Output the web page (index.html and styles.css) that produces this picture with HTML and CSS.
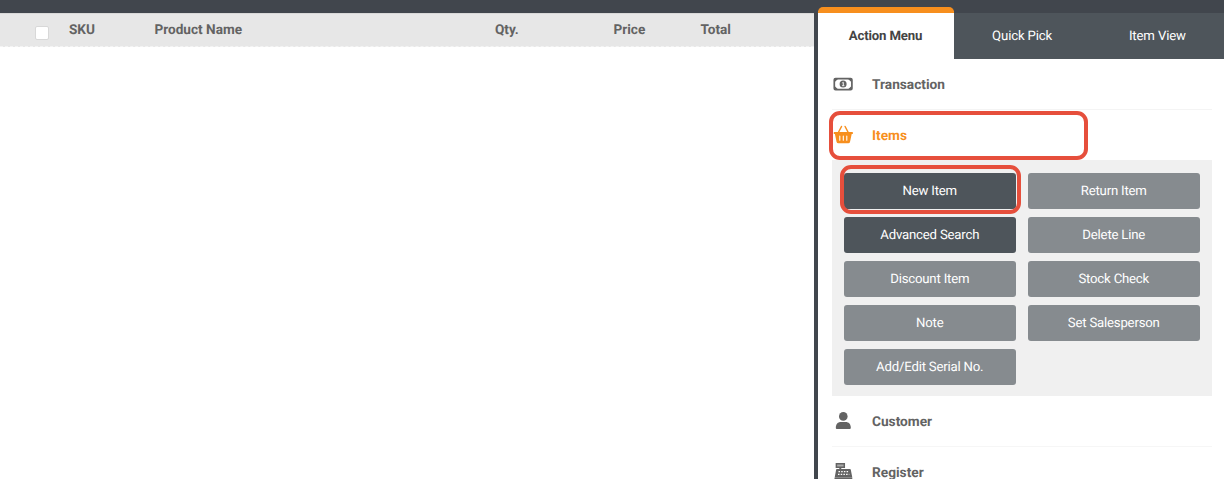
FILE: index.html
```html
<!DOCTYPE html>
<html lang="en">
<head>
<meta charset="utf-8">
<title>Point of Sale</title>
<link rel="stylesheet" href="styles.css">
</head>
<body>
<div class="app">
  <main class="sale">
    <div class="sale-head">
      <span class="check"></span>
      <span>SKU</span>
      <span>Product Name</span>
      <span>Qty.</span>
      <span>Price</span>
      <span>Total</span>
    </div>
  </main>
  <aside class="panel">
    <nav class="tabs">
      <a class="tab active">Action Menu</a>
      <a class="tab">Quick Pick</a>
      <a class="tab">Item View</a>
    </nav>
    <div class="menu">
      <div class="row first">
        <svg class="icon" viewBox="0 0 20 20"><rect x="1.300" y="4.600" width="17.600" height="11" rx="1.200" fill="none" stroke="currentColor" stroke-width="1.700"/><path d="M1.800 5h3.200L1.800 8zM18.300 5h-3.200L18.300 8zM1.800 15.200h3.200l-3.200-3zM18.300 15.200h-3.200l3.200-3z" fill="currentColor"/><circle cx="10.100" cy="10.100" r="3.500" fill="currentColor"/><path d="M9.300 8.900l1-.6v3.200M9.100 11.700h2.300" fill="none" stroke="#fff" stroke-width=".9"/></svg>
        <span>Transaction</span>
      </div>
      <div class="row items">
        <svg class="icon" viewBox="-0.5 0 20 20"><path d="M4.600 8L8 1.500M15 8L11.600 1.500" fill="none" stroke="currentColor" stroke-width="1.500" stroke-linecap="round"/><path d="M.8 7h18a.6.6 0 0 1 .6.6v.8a.6.6 0 0 1-.6.6h-.6l-1.700 7.900a1.800 1.800 0 0 1-1.700 1.400h-10a1.800 1.800 0 0 1-1.700-1.400L1.400 9H.8a.6.6 0 0 1-.6-.6v-.8A.6.6 0 0 1 .8 7z" fill="currentColor"/><path d="M6.300 11v4.300M9.800 11v4.300M13.300 11v4.300" stroke="#fff" stroke-width="1.100" stroke-linecap="round"/></svg>
        <span>Items</span>
        <i class="callout"></i>
      </div>
      <div class="actions">
        <button class="btn dark">New Item<i class="callout small"></i></button>
        <button class="btn">Return Item</button>
        <button class="btn dark">Advanced Search</button>
        <button class="btn">Delete Line</button>
        <button class="btn">Discount Item</button>
        <button class="btn">Stock Check</button>
        <button class="btn">Note</button>
        <button class="btn">Set Salesperson</button>
        <button class="btn">Add/Edit Serial No.</button>
      </div>
      <div class="row customer">
        <svg class="icon" viewBox="-0.5 0 20 20"><circle cx="9.800" cy="5.400" r="4.300" fill="currentColor"/><path d="M2.300 16.800c0-3.800 2-5.900 5.200-5.900h4.600c3.200 0 5.200 2.100 5.200 5.900 0 .8-.5 1.300-1.300 1.300H3.600c-.8 0-1.300-.5-1.300-1.300z" fill="currentColor"/></svg>
        <span>Customer</span>
      </div>
      <div class="row">
        <svg class="icon" viewBox="-0.5 0 20 20"><path d="M2.900 1.800h7.900v3.400H2.900z" fill="#aaa" stroke="currentColor" stroke-width="1.500"/><path d="M6.800 5.500v2.500" stroke="currentColor" stroke-width="2"/><path d="M3.300 7h13.200q.6 0 .8.700l1.500 7.800H1.200l1.400-7.800q.2-.7.7-.7zM1 15.800h17.800v3.400H1z" fill="currentColor"/><path d="M5 9.700h10.300M4.500 12.400h11.300" stroke="#fff" stroke-width="1.200" stroke-dasharray="1.500 1.200"/></svg>
        <span>Register</span>
      </div>
    </div>
  </aside>
</div>
</body>
</html>
```
FILE: styles.css
```css
* { box-sizing: border-box; }
body {
  margin: 0;
  height: 479px;
  overflow: hidden;
  background: #41464d;
  font-family: Roboto, sans-serif;
  text-rendering: geometricPrecision;
  color: #636363;
}
.app {
  display: flex;
  height: 479px;
}
.sale {
  width: 813.5px;
  margin-top: 13px;
  background: #fff;
}
.sale-head {
  display: grid;
  grid-template-columns: 34.500px 85.500px 340.500px 118.500px 87px 1fr;
  height: 34px;
  padding: 0 0 0 34.500px;
  line-height: 32px;
  font-size: 13.6px;
  font-weight: 700;
  background: #e7e7e7;
  border-top: 1px solid #d8d8d8;
  border-bottom: 1px dashed #f4f4f4;
}
.check {
  width: 14px;
  height: 14px;
  margin-top: 12px;
  background: #fff;
  border: 1px solid #d8d8d8;
  border-radius: 2px;
}
.panel {
  width: 406.5px;
  margin-left: 4px;
}
.tabs {
  display: flex;
  align-items: flex-end;
  height: 59px;
}
.tab {
  flex: 1;
  height: 46px;
  padding-left: 2px;
  line-height: 48px;
  text-align: center;
  font-size: 13.2px;
  letter-spacing: -0.15px;
  color: #fff;
  background: #4e555b;
}
.tab.active {
  flex: 0 0 136px;
  height: 52px;
  padding-left: 0;
  line-height: 48px;
  font-weight: 700;
  color: #444;
  background: #fff;
  border-top: 6px solid #f78f1e;
  border-radius: 5px 5px 0 0;
}
.menu {
  height: 420px;
  padding: 0 12px 0 14px;
  background: #fff;
  overflow: hidden;
}
.row {
  display: flex;
  align-items: center;
  height: 50px;
  padding-left: 1.500px;
  font-size: 13.7px;
  font-weight: 700;
}
.row span { padding-top: 1px; }
.row.first {
  height: 51px;
  border-bottom: 1px solid #f4f4f4;
}
.row.customer {
  height: 51px;
  border-bottom: 1px solid #f6f6f6;
}
.row.items {
  position: relative;
  color: #f78f1e;
}
.icon {
  width: 20px;
  height: 20px;
  margin-right: 19px;
}
.callout {
  position: absolute;
  left: -2.500px;
  top: 1px;
  width: 259px;
  height: 49px;
  border: 4px solid #e64f3c;
  border-radius: 11px;
}
.callout.small {
  left: -4px;
  top: -8px;
  width: 181px;
  height: 49px;
}
.actions {
  display: grid;
  grid-template-columns: 171.5px 171.5px;
  grid-auto-rows: 35.5px;
  gap: 8.500px 12.500px;
  height: 236px;
  padding: 13px 12.500px;
  background: #f0f0f0;
}
.btn {
  position: relative;
  padding: 1px 0 0;
  border: 0;
  border-radius: 3px;
  background: #868b8f;
  color: #fff;
  font-family: inherit;
  font-size: 13.2px;
  letter-spacing: -0.2px;
  text-rendering: inherit;
}
.btn.dark { background: #4e555b; }
```
